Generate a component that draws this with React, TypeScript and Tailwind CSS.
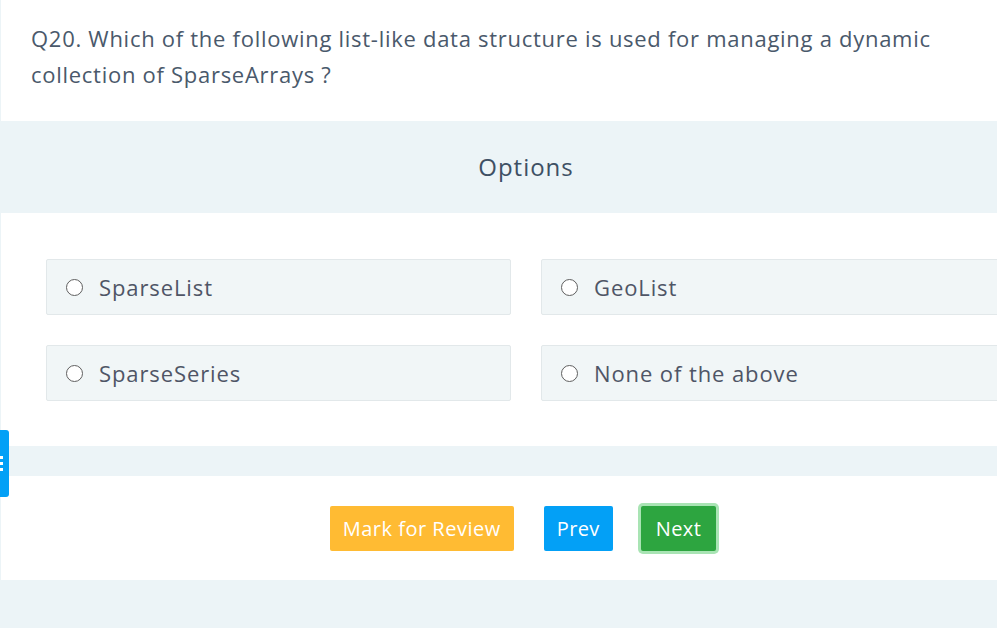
import React from "react";

const options = ["SparseList", "GeoList", "SparseSeries", "None of the above"];

function OptionBox({ label }: { label: string }) {
  return (
    <label className="flex items-center h-[56px] bg-[#f1f6f7] border border-[#e2e8ea] rounded-[2px] pl-[19px] cursor-pointer">
      <span className="w-[17px] h-[17px] rounded-full border-[1.5px] border-[#5f5f5f] bg-white shrink-0"></span>
      <span className="ml-[16px] text-[22px] tracking-[0.9px] text-[#4f5566] leading-none">{label}</span>
    </label>
  );
}

function App() {
  return (
    <div
      className="relative w-[997px] h-[628px] overflow-hidden bg-[#ecf4f7]"
      style={{ fontFamily: '"Open Sans", "Noto Sans", sans-serif' }}
    >
      <div className="ml-px w-[1050px] flex flex-col">
        {/* question */}
        <div className="bg-white pt-[20px] pb-[29px] pl-[30px]">
          <p className="w-[925px] text-[22px] leading-[36px] text-[#4a596b] tracking-[0.72px]">
            Q20. Which of the following list-like data structure is used for managing a dynamic collection of SparseArrays ?
          </p>
        </div>

        {/* options header */}
        <div className="h-[92px] flex items-center justify-center bg-[#ecf4f7]">
          <h3 className="text-[24px] tracking-[1px] text-[#3e5064]">Options</h3>
        </div>

        {/* option list */}
        <div className="bg-white pt-[46px] pb-[45px] px-[45px]">
          <div className="grid grid-cols-[465px_465px] gap-x-[30px] gap-y-[30px]">
            {options.map((o) => (
              <OptionBox key={o} label={o} />
            ))}
          </div>
        </div>

        <div className="h-[30px] bg-[#ecf4f7]"></div>

        {/* actions */}
        <div className="bg-white pt-[30px] pb-[29px] pr-[6px] flex justify-center items-center">
          <button className="h-[45px] px-[13px] bg-[#ffbb33] text-white text-[20px] tracking-[0.5px] rounded-[2px]">
            Mark for Review
          </button>
          <button className="ml-[30px] h-[45px] px-[13px] bg-[#03a0f6] text-white text-[20px] tracking-[0.4px] rounded-[2px]">
            Prev
          </button>
          <button className="ml-[28px] h-[45px] px-[15px] bg-[#2da540] text-white text-[20px] tracking-[0.4px] rounded-[2px] ring-[3px] ring-[#a9e4b4]">
            Next
          </button>
        </div>
      </div>

      {/* side tab */}
      <div className="absolute left-0 top-[430px] w-[9px] h-[67px] bg-[#03a0f6] rounded-r-[3px] flex flex-col justify-center gap-[3px]">
        <span className="w-[3px] h-[3px] bg-white"></span>
        <span className="w-[3px] h-[3px] bg-white"></span>
        <span className="w-[3px] h-[3px] bg-white"></span>
      </div>
    </div>
  );
}

export default App;
